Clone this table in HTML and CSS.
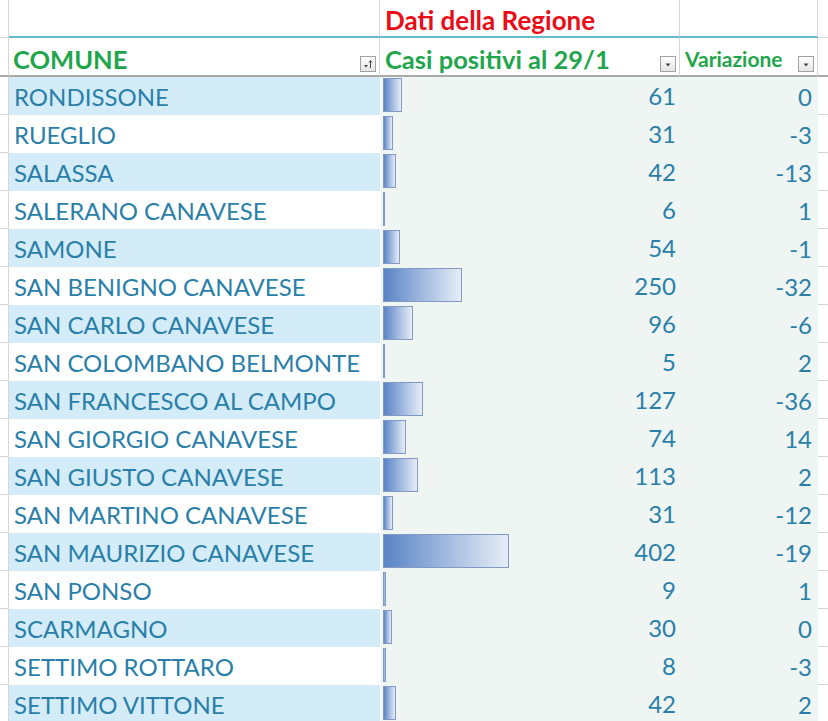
FILE: index.html
```html
<!DOCTYPE html>
<html lang="it">
<head>
<meta charset="utf-8">
<title>Casi positivi per comune</title>
<link rel="stylesheet" href="styles.css">
</head>
<body>
<div class="sheet">
  <div class="row head1">
    <div class="c a"></div>
    <div class="c b"></div>
    <div class="c cc"><span class="red">Dati della Regione</span></div>
    <div class="c d"></div>
    <div class="c e"></div>
  </div>
  <div class="row head2">
    <div class="c a"></div>
    <div class="c b"><span class="hdr">COMUNE</span>
      <span class="fbtn"><svg width="14" height="14" viewBox="0 0 14 14"><path d="M3 8h4l-2 2.5z" fill="#444"/><path d="M9.5 11V4M8 5.5l1.5-2 1.5 2" stroke="#444" stroke-width="1" fill="none"/></svg></span></div>
    <div class="c cc"><span class="hdr">Casi positivi al 29/1</span>
      <span class="fbtn"><svg width="14" height="14" viewBox="0 0 14 14"><path d="M4.5 6.5h5l-2.5 3z" fill="#444"/></svg></span></div>
    <div class="c d"><span class="hdr small">Variazione</span>
      <span class="fbtn"><svg width="14" height="14" viewBox="0 0 14 14"><path d="M4.5 6.5h5l-2.5 3z" fill="#444"/></svg></span></div>
    <div class="c e"></div>
  </div>

  <div class="row data band"><div class="c a"></div><div class="c b">RONDISSONE</div><div class="c cc"><span class="bar" style="width:19px"></span><span class="num">61</span></div><div class="c d">0</div><div class="c e"></div></div>
  <div class="row data"><div class="c a"></div><div class="c b">RUEGLIO</div><div class="c cc"><span class="bar" style="width:10px"></span><span class="num">31</span></div><div class="c d">-3</div><div class="c e"></div></div>
  <div class="row data band"><div class="c a"></div><div class="c b">SALASSA</div><div class="c cc"><span class="bar" style="width:13px"></span><span class="num">42</span></div><div class="c d">-13</div><div class="c e"></div></div>
  <div class="row data"><div class="c a"></div><div class="c b">SALERANO CANAVESE</div><div class="c cc"><span class="bar" style="width:2px"></span><span class="num">6</span></div><div class="c d">1</div><div class="c e"></div></div>
  <div class="row data band"><div class="c a"></div><div class="c b">SAMONE</div><div class="c cc"><span class="bar" style="width:17px"></span><span class="num">54</span></div><div class="c d">-1</div><div class="c e"></div></div>
  <div class="row data"><div class="c a"></div><div class="c b">SAN BENIGNO CANAVESE</div><div class="c cc"><span class="bar" style="width:79px"></span><span class="num">250</span></div><div class="c d">-32</div><div class="c e"></div></div>
  <div class="row data band"><div class="c a"></div><div class="c b">SAN CARLO CANAVESE</div><div class="c cc"><span class="bar" style="width:30px"></span><span class="num">96</span></div><div class="c d">-6</div><div class="c e"></div></div>
  <div class="row data"><div class="c a"></div><div class="c b">SAN COLOMBANO BELMONTE</div><div class="c cc"><span class="bar" style="width:2px"></span><span class="num">5</span></div><div class="c d">2</div><div class="c e"></div></div>
  <div class="row data band"><div class="c a"></div><div class="c b">SAN FRANCESCO AL CAMPO</div><div class="c cc"><span class="bar" style="width:40px"></span><span class="num">127</span></div><div class="c d">-36</div><div class="c e"></div></div>
  <div class="row data"><div class="c a"></div><div class="c b">SAN GIORGIO CANAVESE</div><div class="c cc"><span class="bar" style="width:23px"></span><span class="num">74</span></div><div class="c d">14</div><div class="c e"></div></div>
  <div class="row data band"><div class="c a"></div><div class="c b">SAN GIUSTO CANAVESE</div><div class="c cc"><span class="bar" style="width:35px"></span><span class="num">113</span></div><div class="c d">2</div><div class="c e"></div></div>
  <div class="row data"><div class="c a"></div><div class="c b">SAN MARTINO CANAVESE</div><div class="c cc"><span class="bar" style="width:10px"></span><span class="num">31</span></div><div class="c d">-12</div><div class="c e"></div></div>
  <div class="row data band"><div class="c a"></div><div class="c b">SAN MAURIZIO CANAVESE</div><div class="c cc"><span class="bar" style="width:126px"></span><span class="num">402</span></div><div class="c d">-19</div><div class="c e"></div></div>
  <div class="row data"><div class="c a"></div><div class="c b">SAN PONSO</div><div class="c cc"><span class="bar" style="width:3px"></span><span class="num">9</span></div><div class="c d">1</div><div class="c e"></div></div>
  <div class="row data band"><div class="c a"></div><div class="c b">SCARMAGNO</div><div class="c cc"><span class="bar" style="width:9px"></span><span class="num">30</span></div><div class="c d">0</div><div class="c e"></div></div>
  <div class="row data"><div class="c a"></div><div class="c b">SETTIMO ROTTARO</div><div class="c cc"><span class="bar" style="width:3px"></span><span class="num">8</span></div><div class="c d">-3</div><div class="c e"></div></div>
  <div class="row data band"><div class="c a"></div><div class="c b">SETTIMO VITTONE</div><div class="c cc"><span class="bar" style="width:13px"></span><span class="num">42</span></div><div class="c d">2</div><div class="c e"></div></div>
</div>
</body>
</html>
```
FILE: styles.css
```css
html, body {
  margin: 0;
  padding: 0;
  background: #ffffff;
}
body {
  font-family: "Lato", "Open Sans", sans-serif;
  overflow: hidden;
}
.sheet {
  width: 828px;
}
.row {
  display: grid;
  grid-template-columns: 9px 371px 300px 138px 10px;
  height: 38px;
}
.c {
  box-sizing: border-box;
  display: flex;
  align-items: center;
  min-width: 0;
}
.a {
  border-right: 1px solid #d6d6d6;
  border-bottom: 1px solid #d6d6d6;
}
.e {
  border-bottom: 1px solid #d6d6d6;
}

/* header row 1 */
.head1 .b, .head1 .cc, .head1 .d {
  border-right: 1px solid #d6d6d6;
  border-bottom: 2px solid #64b9cf;
}
.head1 .cc {
  padding-left: 5px;
  padding-top: 3px;
}
.red {
  color: #ea0c16;
  font-weight: 700;
  font-size: 26px;
  white-space: nowrap;
}

/* header row 2 */
.head2 {
  height: 39px;
}
.head2 .c {
  border-bottom: 2px solid #a9a9a9;
  align-items: flex-end;
  padding-bottom: 1px;
}
.head2 .b, .head2 .cc, .head2 .d {
  border-right: 1px solid #d6d6d6;
  justify-content: space-between;
  padding-left: 5px;
  padding-right: 3px;
}
.head2 .b {
  padding-left: 4px;
}
.hdr {
  color: #1fa64c;
  font-weight: 700;
  font-size: 25.5px;
  white-space: nowrap;
  line-height: 30px;
}
.hdr.small {
  font-size: 21px;
}
.fbtn {
  width: 16px;
  height: 16px;
  box-sizing: border-box;
  border: 1px solid #a2a2a2;
  background: linear-gradient(#ffffff, #e4e4e4);
  display: flex;
  align-items: center;
  justify-content: center;
  margin-bottom: 2px;
  flex: none;
}
.fbtn svg {
  display: block;
}

/* data rows */
.data {
  color: #2a7fa9;
  font-size: 24px;
}
.data .b {
  padding-left: 5px;
  white-space: nowrap;
}
.data.band .b {
  background: #d3ecf8;
}
.data .cc, .data .d {
  background: #eef5f3;
}
.data .cc {
  align-items: stretch;
  padding: 1px 4px 3px 2px;
  border-left: 1px solid #ffffff;
}
.bar {
  box-sizing: border-box;
  min-width: 2px;
  border: 1px solid #8199c4;
  background: linear-gradient(90deg, #5a84c5 0%, #a8bfe2 55%, #e6edf7 100%);
  flex: none;
}
.num {
  margin-left: auto;
  display: flex;
  align-items: center;
}
.data .d {
  justify-content: flex-end;
  padding-right: 6px;
}
```
